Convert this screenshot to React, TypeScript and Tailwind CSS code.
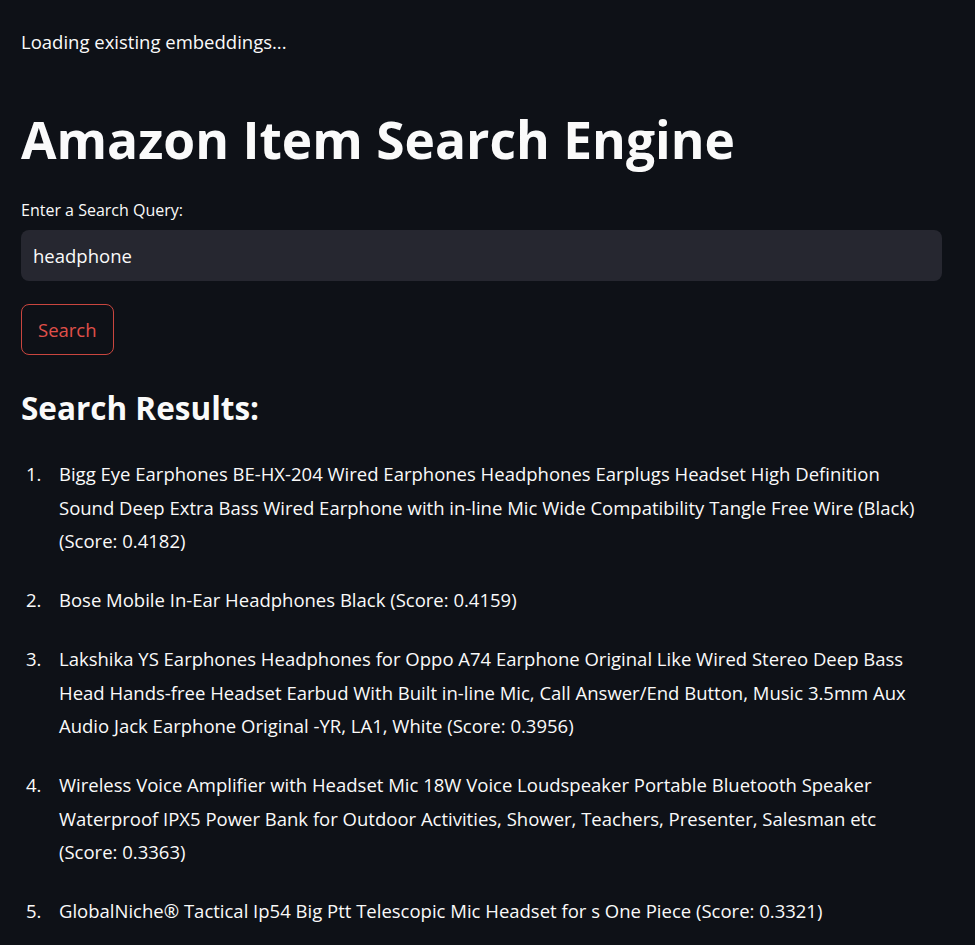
const results = [
  {
    title:
      "Bigg Eye Earphones BE-HX-204 Wired Earphones Headphones Earplugs Headset High Definition Sound Deep Extra Bass Wired Earphone with in-line Mic Wide Compatibility Tangle Free Wire (Black)",
    score: "0.4182",
  },
  { title: "Bose Mobile In-Ear Headphones Black", score: "0.4159" },
  {
    title:
      "Lakshika YS Earphones Headphones for Oppo A74 Earphone Original Like Wired Stereo Deep Bass Head Hands-free Headset Earbud With Built in-line Mic, Call Answer/End Button, Music 3.5mm Aux Audio Jack Earphone Original -YR, LA1, White",
    score: "0.3956",
  },
  {
    title:
      "Wireless Voice Amplifier with Headset Mic 18W Voice Loudspeaker Portable Bluetooth Speaker Waterproof IPX5 Power Bank for Outdoor Activities, Shower, Teachers, Presenter, Salesman etc",
    score: "0.3363",
  },
  {
    title: "GlobalNiche® Tactical Ip54 Big Ptt Telescopic Mic Headset for s One Piece",
    score: "0.3321",
  },
];

export default function App() {
  return (
    <div className="min-h-screen bg-[#0e1117] text-[#fafafa] font-['Open_Sans',sans-serif]">
      <div className="w-[921px] ml-[21px] pt-[29px]">
        <p className="text-[18.5px] leading-[26px]">Loading existing embeddings...</p>

        <h1 className="mt-[54px] text-[51.5px] leading-[60px] font-bold">
          Amazon Item Search Engine
        </h1>

        <label className="block mt-[31px] text-[16px] leading-[20px]">Enter a Search Query:</label>
        <div className="mt-[10px] h-[51px] rounded-[8px] bg-[#262730] flex items-center px-[12px] text-[18.5px]">
          headphone
        </div>

        <button className="mt-[23px] h-[51px] px-[16px] rounded-[8px] border border-[#c9463f] text-[#e0504a] text-[18.5px]">
          Search
        </button>

        <h2 className="mt-[33px] text-[31.5px] leading-[40px] font-bold">Search Results:</h2>

        <ol className="mt-[29px] w-[910px] text-[18.5px] leading-[33.5px]">
          {results.map((r, i) => (
            <li key={i} className="mb-[25.5px] flex">
              <span className="w-[38px] shrink-0 pl-[5px]">{i + 1}.</span>
              <span>
                {r.title} (Score: {r.score})
              </span>
            </li>
          ))}
        </ol>
      </div>
    </div>
  );
}
